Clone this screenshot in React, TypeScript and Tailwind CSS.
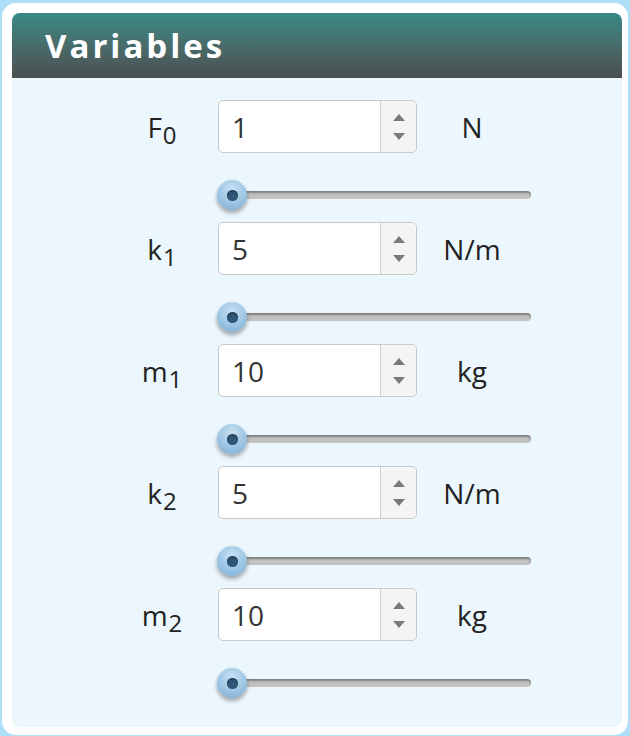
import * as React from 'react'

const rows = [
  { sym: 'F', sub: '0', value: '1', unit: 'N' },
  { sym: 'k', sub: '1', value: '5', unit: 'N/m' },
  { sym: 'm', sub: '1', value: '10', unit: 'kg' },
  { sym: 'k', sub: '2', value: '5', unit: 'N/m' },
  { sym: 'm', sub: '2', value: '10', unit: 'kg' },
]

function Spinner() {
  return (
    <div className="flex w-[36px] flex-col items-center justify-center gap-[12px] border-l border-[#cfcfcf] bg-[#f4f4f4] rounded-r-[5px]">
      <svg width="12" height="7" viewBox="0 0 12 7">
        <path d="M6 0 L12 7 L0 7 Z" fill="#7a7a7a" />
      </svg>
      <svg width="12" height="7" viewBox="0 0 12 7">
        <path d="M0 0 L12 0 L6 7 Z" fill="#7a7a7a" />
      </svg>
    </div>
  )
}

function Slider() {
  return (
    <div className="flex h-[69px] items-start pl-[205px] pt-[27px]">
      <div className="relative h-[30px] w-[314px]">
        <div className="absolute left-[14px] right-0 top-[11px] h-[8px] rounded-full bg-[#c2c2c2] shadow-[inset_0_2px_2px_rgba(0,0,0,0.35)]" />
        <div className="absolute left-0 top-0 flex h-[30px] w-[30px] items-center justify-center rounded-full bg-[radial-gradient(circle_at_50%_30%,#c8e0f2_0%,#9cc5e4_55%,#7aa9cf_100%)] shadow-[0_3px_4px_rgba(0,0,0,0.35)]">
          <div className="h-[11px] w-[11px] rounded-full bg-[#2f5878] shadow-[inset_0_1px_2px_rgba(0,0,0,0.5)]" />
        </div>
      </div>
    </div>
  )
}

export default function App() {
  return (
    <div className="h-[736px] w-[630px] overflow-hidden bg-[#addff7] pl-[2px] pr-[2px] pt-[3px] font-['Open_Sans',sans-serif]">
      <div className="h-[732px] rounded-[14px] bg-white pb-[8px] pl-[10px] pr-[6px] pt-[10px]">
        <div className="flex h-full flex-col overflow-hidden rounded-[8px] bg-[#ecf7fd]">
          <div className="flex h-[65px] items-center bg-gradient-to-b from-[#388a86] to-[#4b4f50] pl-[33px]">
            <span className="text-[33px] font-bold tracking-[3px] text-white">Variables</span>
          </div>
          <div className="pt-[22px]">
            {rows.map((r, i) => (
              <div key={i}>
                <div className="flex h-[53px] items-center">
                  <div className="flex w-[206px] justify-center pl-[94px] text-[28px] text-[#222]">
                    <span>
                      {r.sym}
                      <sub className="relative top-[6px] ml-[1px] text-[24px]">{r.sub}</sub>
                    </span>
                  </div>
                  <div className="flex h-[53px] w-[199px] rounded-[5px] border border-[#c8c8c8] bg-white">
                    <div className="flex flex-1 items-center pl-[13px] text-[28px] text-[#333]">{r.value}</div>
                    <Spinner />
                  </div>
                  <div className="w-[110px] text-center text-[28px] text-[#222]">{r.unit}</div>
                </div>
                <Slider />
              </div>
            ))}
          </div>
        </div>
      </div>
    </div>
  )
}
